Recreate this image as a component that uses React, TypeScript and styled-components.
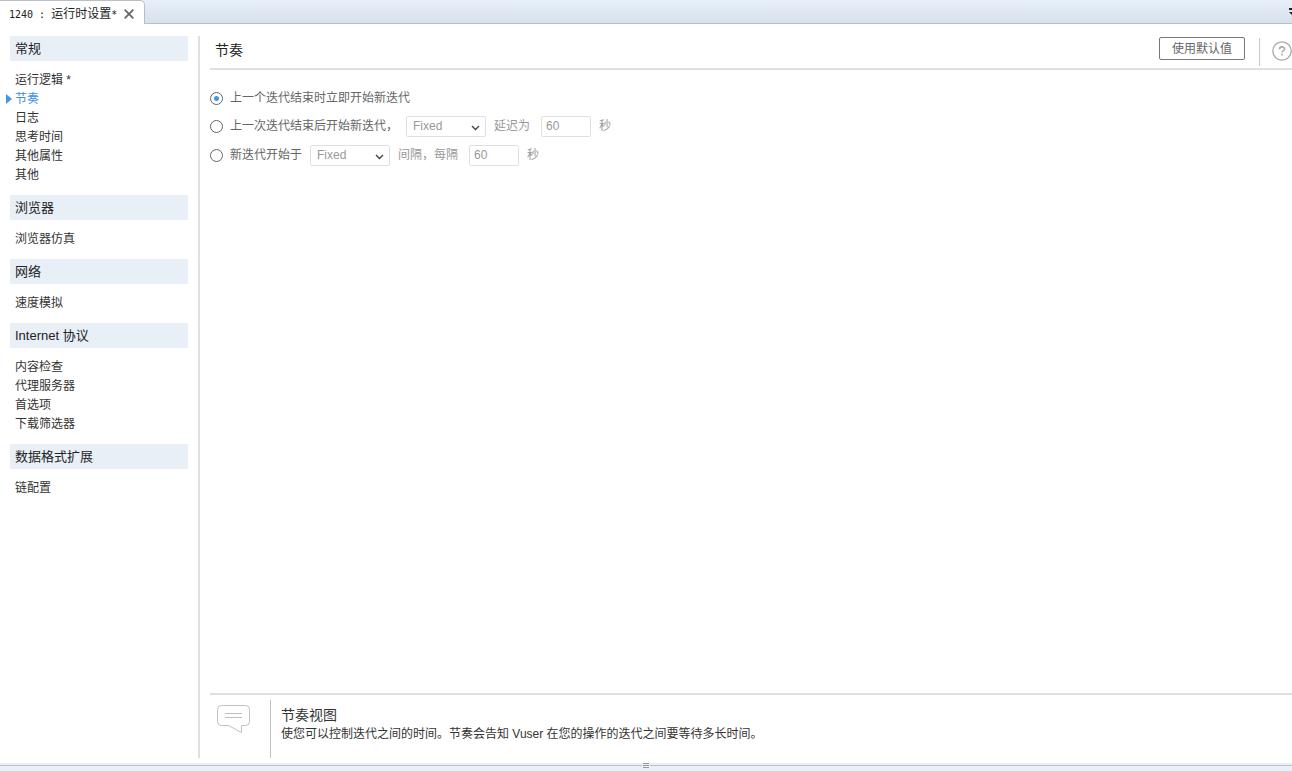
import React, { useState } from "react";
import styled, { createGlobalStyle } from "styled-components";

const sans = `"Liberation Sans", "Noto Sans CJK SC", sans-serif`;

const GlobalStyle = createGlobalStyle`
  *, *::before, *::after { box-sizing: border-box; }
  body { margin: 0; background: #fff; color: #333; font: 12px/19px ${sans}; }
  button, input, select { font: inherit; }
  h1, h2, p, ul { margin: 0; padding: 0; font-weight: 400; }
`;

const Page = styled.div`
  display: flex;
  flex-direction: column;
  min-height: 100vh;
  overflow: hidden;
`;

const TabBar = styled.div`
  display: flex;
  height: 24px;
  justify-content: space-between;
  background: linear-gradient(#e8eff8, #d6e1ee);
  border-bottom: 1px solid #b9bec6;
`;

const Tab = styled.div`
  display: flex;
  align-items: center;
  gap: 7px;
  height: 24px;
  padding: 3px 10px 0 9px;
  background: #fff;
  border: 1px solid #b9bec6;
  border-width: 1px 1px 0 0;
  border-radius: 0 5px 0 0;
  white-space: pre;
  color: #222;
`;

const TabNumber = styled.span`
  font-family: "DejaVu Sans Mono", monospace;
  font-size: 10px;
`;

const IconButton = styled.button`
  display: flex;
  padding: 0;
  border: 0;
  background: none;
  color: ${(p) => p.color};
  svg { flex: none; }
`;

const TabMenu = styled(IconButton)`
  width: 3px;
  overflow: hidden;
  padding-top: 8px;
`;

const Body = styled.div`
  display: flex;
  flex: 1;
  padding: 12px 0 5px;
`;

const Sidebar = styled.nav`
  width: 200px;
  padding: 0 10px;
  border-right: 2px solid #e0e0e0;
`;

const GroupTitle = styled.h2`
  height: 25px;
  padding: 0 5px;
  background: #e8eff7;
  font-size: 13px;
  line-height: 25px;
  color: #222;
`;

const NavList = styled.ul`
  padding: 10px 0;
  list-style: none;
`;

const NavItem = styled.li`
  height: 19px;
`;

const NavLink = styled.a<{ $active: boolean }>`
  position: relative;
  display: block;
  padding-left: 5px;
  text-decoration: none;
  color: ${(p) => (p.$active ? "#3d8ee0" : "#333")};
`;

const Marker = styled.svg`
  position: absolute;
  left: -4px;
  top: 4px;
`;

const Main = styled.main`
  display: flex;
  flex: 1;
  flex-direction: column;
  padding-left: 10px;
`;

const Header = styled.header`
  display: flex;
  align-items: center;
  height: 34px;
  padding: 0 0 3px 5px;
  border-bottom: 2px solid #e0e0e0;
`;

const Title = styled.h1`
  flex: 1;
  font-size: 14px;
  color: #222;
`;

const DefaultsButton = styled.button`
  width: 86px;
  height: 23px;
  margin-bottom: 4px;
  padding: 1px 0 0;
  border: 1px solid #777;
  border-radius: 2px;
  background: #fff;
  color: #666;
`;

const HeaderRule = styled.span`
  width: 1px;
  height: 28px;
  margin: 2px 12px 0 14px;
  background: #c8c8c8;
`;

const Options = styled.form`
  display: flex;
  flex: 1;
  flex-direction: column;
  gap: 8px;
  padding-top: 19px;
`;

const OptionRow = styled.div`
  display: flex;
  align-items: center;
  gap: 8px;
  min-height: 19px;
  color: #999;
`;

const RadioLabel = styled.label`
  display: flex;
  align-items: center;
  gap: 7px;
  color: #666;
`;

const Radio = styled.input`
  appearance: none;
  width: 13px;
  height: 13px;
  margin: 0;
  border: 1px solid #666;
  border-radius: 50%;
  background: #fff;
  &:checked {
    background: radial-gradient(circle, #3f97ea 2px, #fff 3px);
  }
`;

const SelectBox = styled.span`
  display: grid;
  width: 80px;
  align-items: center;
  > * { grid-area: 1 / 1; }
  svg { justify-self: end; margin: 3px 6px 0 0; pointer-events: none; }
`;

const Select = styled.select`
  appearance: none;
  height: 21px;
  padding: 0 6px;
  border: 1px solid #e0e0e0;
  border-radius: 2px;
  background: #fff;
  color: #999;
  opacity: 1;
`;

const FieldLabel = styled.label`
  display: flex;
  align-items: center;
  gap: 11px;
`;

const NumberBox = styled.input`
  width: 50px;
  height: 21px;
  padding: 0 4px 2px;
  border: 1px solid #e0e0e0;
  border-radius: 2px;
  background: #fff;
  color: #999;
`;

const Help = styled.footer`
  display: flex;
  height: 65px;
  padding-top: 5px;
  border-top: 2px solid #e0e0e0;
`;

const HelpIcon = styled.div`
  width: 61px;
  padding: 4px 0 0 6px;
  border-right: 1px solid #c0c0c0;
`;

const HelpText = styled.div`
  padding: 5px 10px;
`;

const HelpTitle = styled.h2`
  font-size: 14px;
  line-height: 20px;
`;

const Splitter = styled.div`
  display: flex;
  justify-content: center;
  height: 8px;
  background: linear-gradient(#bfc3c8, #bfc3c8) 0 2px / 100% 1px no-repeat #e8eff7;
`;

const groups = [
  { title: "常规", items: ["运行逻辑 *", "节奏", "日志", "思考时间", "其他属性", "其他"] },
  { title: "浏览器", items: ["浏览器仿真"] },
  { title: "网络", items: ["速度模拟"] },
  { title: "Internet 协议", items: ["内容检查", "代理服务器", "首选项", "下载筛选器"] },
  { title: "数据格式扩展", items: ["链配置"] },
];

function DisabledSelect({ label }: { label: string }) {
  return (
    <SelectBox>
      <Select disabled aria-label={label}>
        <option>Fixed</option>
      </Select>
      <svg width="9" height="6" viewBox="0 0 9 6" fill="none" stroke="#444" strokeWidth="1.4">
        <path d="M1 1l3.5 3.5L8 1" />
      </svg>
    </SelectBox>
  );
}

export default function App() {
  const [mode, setMode] = useState(0);
  const radio = (value: number, text: string) => (
    <RadioLabel>
      <Radio type="radio" name="pacing" checked={mode === value} onChange={() => setMode(value)} />
      {text}
    </RadioLabel>
  );

  return (
    <Page>
      <GlobalStyle />
      <TabBar>
        <Tab>
          <span>
            <TabNumber>{"1240 : "}</TabNumber>
            运行时设置
            <TabNumber>*</TabNumber>
          </span>
          <IconButton color="#666" aria-label="关闭">
            <svg width="10" height="10" viewBox="0 0 10 10" stroke="currentColor" strokeWidth="1.8">
              <path d="M.7.7l8.6 8.6M9.3.7L.7 9.3" />
            </svg>
          </IconButton>
        </Tab>
        <TabMenu color="#222" aria-label="标签列表">
          <svg width="8" height="8" viewBox="0 0 8 8" fill="currentColor">
            <path d="M0 0h8v2H0zM0 4h8L4 8z" />
          </svg>
        </TabMenu>
      </TabBar>
      <Body>
        <Sidebar>
          {groups.map((group) => (
            <section key={group.title}>
              <GroupTitle>{group.title}</GroupTitle>
              <NavList>
                {group.items.map((item) => (
                  <NavItem key={item}>
                    <NavLink href="#" $active={item === "节奏"}>
                      {item === "节奏" && (
                        <Marker width="6" height="10" viewBox="0 0 6 10" fill="#3f97ea">
                          <path d="M0 0l6 5-6 5z" />
                        </Marker>
                      )}
                      {item}
                    </NavLink>
                  </NavItem>
                ))}
              </NavList>
            </section>
          ))}
        </Sidebar>
        <Main>
          <Header>
            <Title>节奏</Title>
            <DefaultsButton>使用默认值</DefaultsButton>
            <HeaderRule />
            <IconButton color="#aaa" aria-label="帮助">
              <svg width="20" height="20" viewBox="0 0 20 20" fill="none" stroke="currentColor" strokeWidth="1.3">
                <circle cx="10" cy="10" r="9.2" />
                <path d="M7.5 8.3c0-3.3 5-3.1 5-.3 0 1.8-2.5 1.8-2.5 3.6M10 12.8v1.6" strokeWidth="1.6" />
              </svg>
            </IconButton>
          </Header>
          <Options>
            <OptionRow>{radio(0, "上一个迭代结束时立即开始新迭代")}</OptionRow>
            <OptionRow>
              {radio(1, "上一次迭代结束后开始新迭代，")}
              <DisabledSelect label="延迟类型" />
              <FieldLabel>
                延迟为
                <NumberBox disabled defaultValue="60" />
              </FieldLabel>
              秒
            </OptionRow>
            <OptionRow>
              {radio(2, "新迭代开始于")}
              <DisabledSelect label="间隔类型" />
              <FieldLabel>
                间隔，每隔
                <NumberBox disabled defaultValue="60" />
              </FieldLabel>
              秒
            </OptionRow>
          </Options>
          <Help>
            <HelpIcon>
              <svg width="35" height="30" viewBox="0 0 35 30" fill="none" stroke="#c0c0c0">
                <path d="M5.5 1.5h24a4 4 0 0 1 4 4v12a4 4 0 0 1-4 4h-4v7l-13-7h-7a4 4 0 0 1-4-4v-12a4 4 0 0 1 4-4zM9 9.5h17M9 13.5h17" />
              </svg>
            </HelpIcon>
            <HelpText>
              <HelpTitle>节奏视图</HelpTitle>
              <p>使您可以控制迭代之间的时间。节奏会告知 Vuser 在您的操作的迭代之间要等待多长时间。</p>
            </HelpText>
          </Help>
        </Main>
      </Body>
      <Splitter>
        <svg width="8" height="6" viewBox="0 0 8 6">
          <path d="M0 0h8v6H0z" fill="#e8eff7" />
          <path d="M1 .5h6M1 2.5h6M1 4.5h6" stroke="#999" />
        </svg>
      </Splitter>
    </Page>
  );
}
